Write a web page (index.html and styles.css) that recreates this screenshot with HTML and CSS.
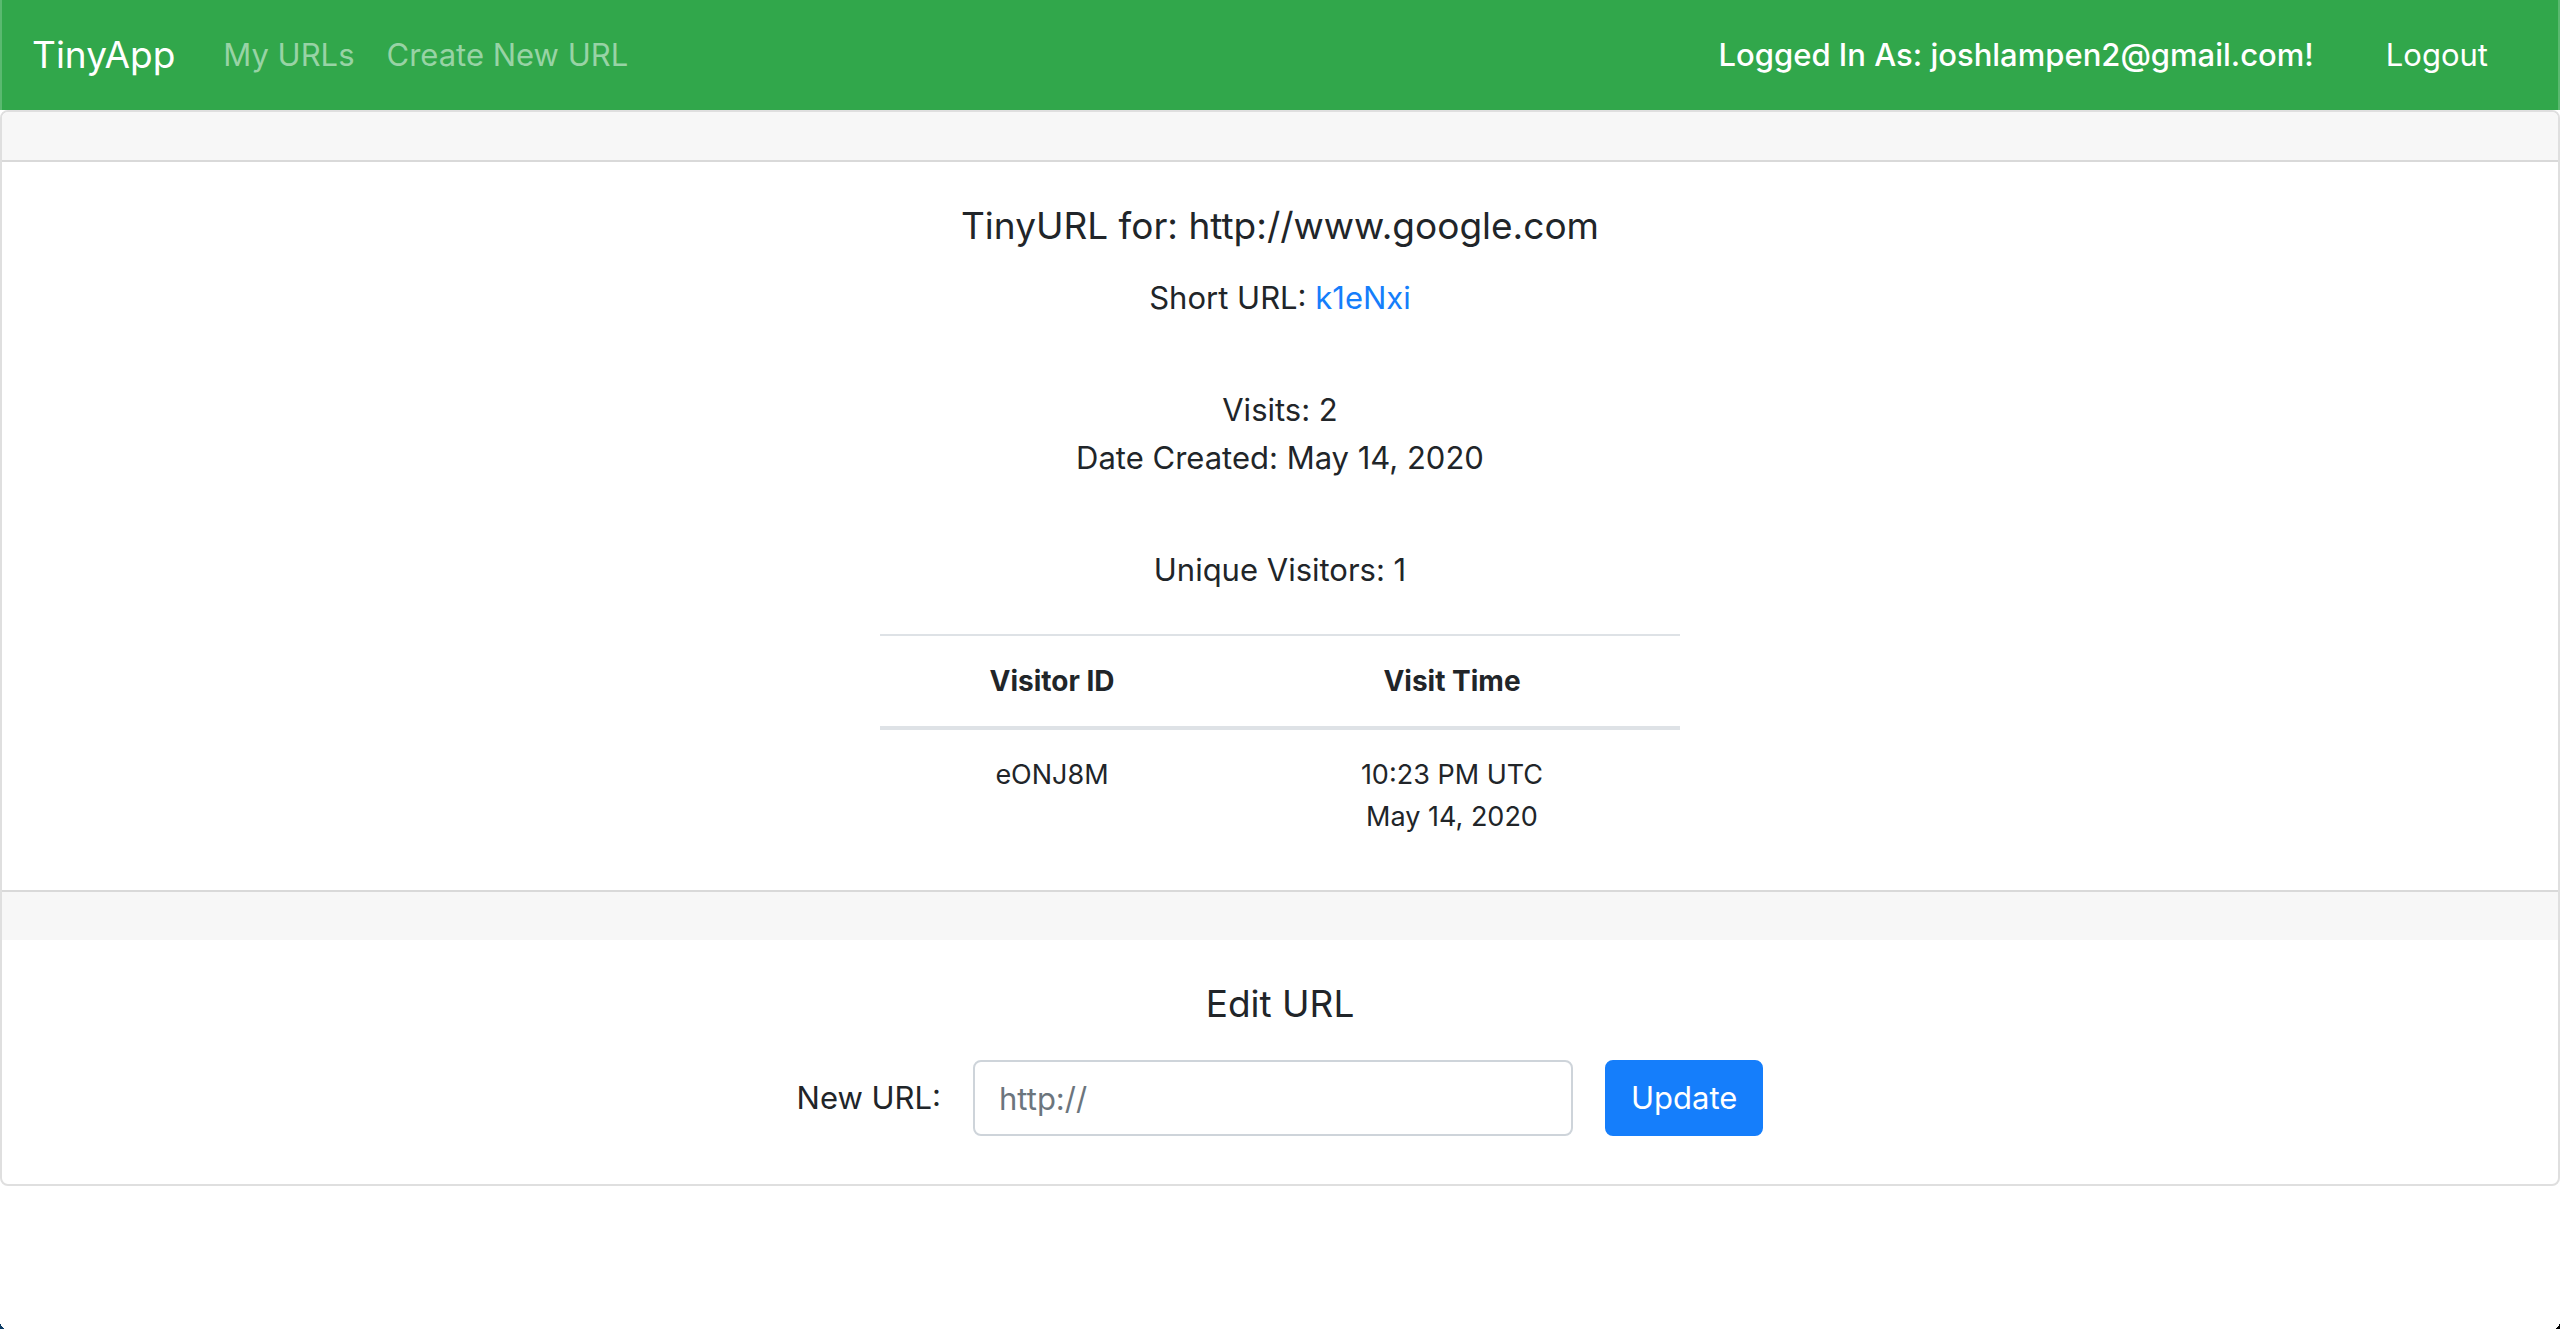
FILE: index.html
```html
<!DOCTYPE html>
<html lang="en">
<head>
<meta charset="utf-8">
<title>TinyApp</title>
<link rel="stylesheet" href="styles.css">
</head>
<body>
<header class="navbar">
  <a class="brand" href="#">TinyApp</a>
  <nav class="nav">
    <a class="nav-link" href="#">My URLs</a>
    <a class="nav-link" href="#">Create New URL</a>
  </nav>
  <form class="account">
    <span class="user">Logged In As: joshlampen2@gmail.com!</span>
    <button class="logout" type="submit">Logout</button>
  </form>
</header>
<main class="card">
  <div class="card-header"></div>
  <section class="card-body stats">
    <h1 class="title">TinyURL for: http://www.google.com</h1>
    <p class="text">Short URL: <a class="link" href="#">k1eNxi</a></p>
    <p class="text">Visits: 2<br>Date Created: May 14, 2020</p>
    <p class="text last">Unique Visitors: 1</p>
    <table class="table">
      <thead>
        <tr><th class="id-column">Visitor ID</th><th>Visit Time</th></tr>
      </thead>
      <tbody>
        <tr><td>eONJ8M</td><td>10:23 PM UTC<br>May 14, 2020</td></tr>
      </tbody>
    </table>
  </section>
  <div class="card-footer"></div>
  <section class="card-body edit">
    <h2 class="title">Edit URL</h2>
    <form class="edit-form">
      <label for="new-url">New URL:</label>
      <input class="input" id="new-url" type="text" placeholder="http://">
      <button class="update" type="submit">Update</button>
    </form>
  </section>
</main>
<div class="corner corner-left"></div>
<div class="corner corner-right"></div>
</body>
</html>
```
FILE: styles.css
```css
* { box-sizing: border-box; }
body {
  margin: 0;
  background: #fff;
  color: #212529;
  font: 31px/48px Inter, "Liberation Sans", sans-serif;
}
a { text-decoration: none; }
button, input { font: inherit; }
.navbar {
  display: flex;
  align-items: center;
  padding: 0 30px;
  min-height: 110px;
  border: solid #5ab970;
  border-width: 0 2px;
  background: #31a74b;
}
.brand { margin-right: 32px; color: #fff; font-size: 37px; }
.nav { display: flex; }
.nav-link { padding: 16px; color: #98d3a5; }
.account { display: flex; align-items: center; margin-left: auto; gap: 32px; }
.user { color: #fff; font-weight: 500; }
.logout { padding: 12px 40px; border: 0; background: none; color: #fff; }
.card { border: 2px solid #dfdfdf; border-radius: 8px; }
.card-header, .card-footer { height: 50px; background: #f7f7f7; }
.card-header { border-bottom: 2px solid #d9d9d9; border-radius: 6px 6px 0 0; }
.card-footer { border-top: 2px solid #d9d9d9; }
.card-body { padding: 40px; text-align: center; }
.stats { padding-bottom: 28px; }
.edit { padding-bottom: 48px; }
.title { margin: 0 0 24px; font-size: 37px; line-height: 48px; font-weight: 400; }
.edit .title { margin-bottom: 32px; }
.text { margin: 0 0 64px; }
.last { margin-bottom: 40px; }
.link { color: #157efb; }
.table { width: 800px; max-width: 100%; margin: 0 auto; border-collapse: collapse; font-size: 27px; line-height: 42px; }
.table th, .table td { padding: 24px; vertical-align: top; }
.table th { border-top: 2px solid #dee2e6; border-bottom: 4px solid #dee2e6; font-size: 28px; font-weight: 700; }
.id-column { width: 43%; }
.edit-form { display: flex; justify-content: center; align-items: center; gap: 32px; }
.input {
  width: 600px;
  height: 76px;
  padding: 12px 24px;
  border: 2px solid #ced4da;
  border-radius: 8px;
  color: #495057;
}
.input::placeholder { color: #6c757d; opacity: 1; }
.update { height: 76px; padding: 12px 24px; border: 2px solid #157efb; border-radius: 8px; background: #157efb; color: #fff; }

/* rounded bottom corners of the window */
.corner { position: fixed; bottom: 0; width: 6px; height: 8px; }
.corner-left { left: 0; background: radial-gradient(6px 8px at 100% 0, transparent 97%, #0b3c66 100%); }
.corner-right { right: 0; background: radial-gradient(6px 8px at 0 0, transparent 97%, #000 100%); }
```
